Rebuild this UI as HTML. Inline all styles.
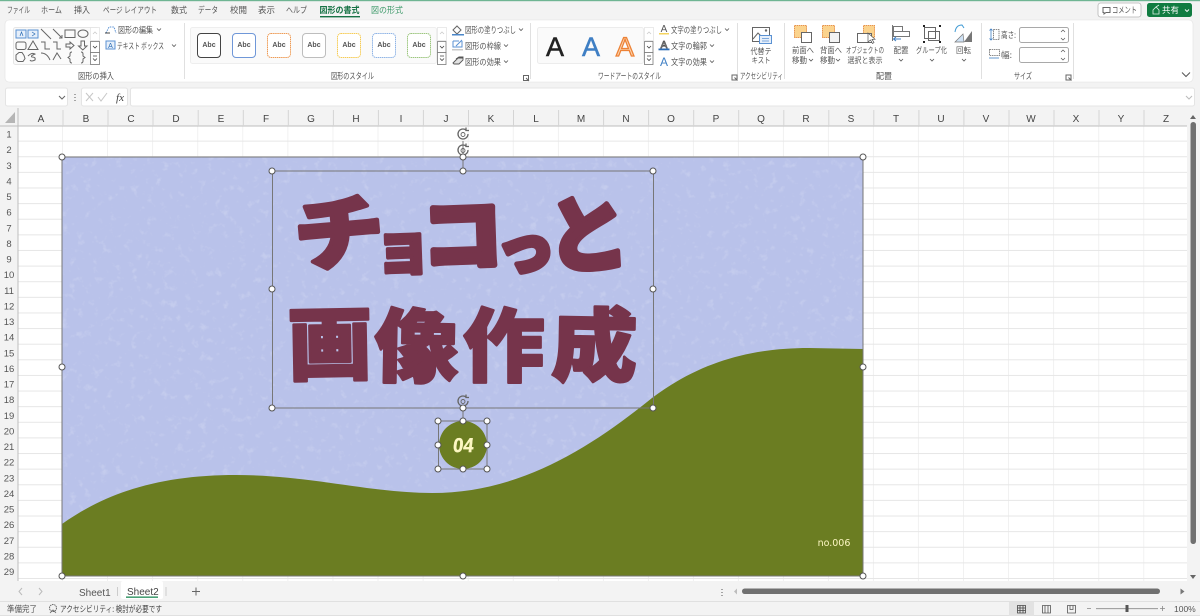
<!DOCTYPE html>
<html lang="ja">
<head>
<meta charset="utf-8">
<title>Excel</title>
<style>
html,body{margin:0;padding:0;background:#f3f3f3;width:1200px;height:616px;overflow:hidden}
svg{display:block}
text{font-family:"Liberation Sans","Noto Sans CJK JP",sans-serif;fill:#444;font-size:8.5px}
.t{font-family:"Noto Sans CJK JP","Liberation Sans",sans-serif;fill:#555}
.h{font-size:10px;fill:#444;text-anchor:middle}
.r{font-size:9.5px;fill:#555;text-anchor:middle}
.c{font-family:"Noto Sans CJK JP","Liberation Sans",sans-serif;fill:#555;font-size:8px;text-anchor:middle}
.big text{font-family:"Noto Sans CJK JP",sans-serif;font-weight:900;fill:#76344b;stroke:#76344b;stroke-linejoin:round}
.ic{fill:none;stroke:#666;stroke-width:1}
.abc{font-size:7px;font-weight:bold;fill:#555;text-anchor:middle}
.hd{fill:#fff;stroke:#555;stroke-width:1}
.rot{fill:none;stroke:#666;stroke-width:1.3}
</style>
</head>
<body>
<svg width="1200" height="616" viewBox="0 0 1200 616" xmlns="http://www.w3.org/2000/svg">
<defs>
<filter id="mott" x="0" y="0" width="100%" height="100%">
<feTurbulence type="fractalNoise" baseFrequency="0.13" numOctaves="3" seed="7"/>
<feColorMatrix type="matrix" values="0 0 0 0 1  0 0 0 0 1  0 0 0 0 1  4 0 0 0 -2.35"/>
</filter>
<pattern id="gv" width="45.05" height="15.62" patternUnits="userSpaceOnUse" x="17.9" y="126">
<rect width="45.05" height="15.62" fill="#fff"/>
<path d="M45 0V15.62M0 15.1H45.05" stroke="#e6e6e6" stroke-width="1" fill="none"/>
</pattern>
</defs>

<!-- base -->
<rect width="1200" height="616" fill="#f3f3f3"/>
<rect width="1200" height="1.2" fill="#6fb593"/>

<!-- tabs -->
<g class="tabs">
<text class="t" x="7" y="13" textLength="23" lengthAdjust="spacingAndGlyphs">ファイル</text>
<text class="t" x="41" y="13" textLength="21" lengthAdjust="spacingAndGlyphs">ホーム</text>
<text class="t" x="74" y="13" textLength="16" lengthAdjust="spacingAndGlyphs">挿入</text>
<text class="t" x="103" y="13" textLength="54" lengthAdjust="spacingAndGlyphs">ページ レイアウト</text>
<text class="t" x="171" y="13" textLength="16" lengthAdjust="spacingAndGlyphs">数式</text>
<text class="t" x="198" y="13" textLength="20" lengthAdjust="spacingAndGlyphs">データ</text>
<text class="t" x="230" y="13" textLength="17" lengthAdjust="spacingAndGlyphs">校閲</text>
<text class="t" x="258" y="13" textLength="17" lengthAdjust="spacingAndGlyphs">表示</text>
<text class="t" x="286" y="13" textLength="21" lengthAdjust="spacingAndGlyphs">ヘルプ</text>
<text class="t" x="319.500" y="13" textLength="40" lengthAdjust="spacingAndGlyphs" style="fill:#177245;font-weight:bold">図形の書式</text>
<rect x="320" y="16" width="40" height="1.4" fill="#177245"/>
<text class="t" x="371" y="13" textLength="32" lengthAdjust="spacingAndGlyphs" style="fill:#3f9a6b">図の形式</text>
</g>

<!-- comment / share -->
<rect x="1098" y="3" width="43" height="14" rx="2.5" fill="#fff" stroke="#b5b5b5" stroke-width=".8"/>
<path d="M1103 7.500h7v5h-4l-2 1.500v-1.500h-1z" class="ic" stroke-width=".8"/>
<text class="t" x="1112" y="13" textLength="25" lengthAdjust="spacingAndGlyphs">コメント</text>
<rect x="1147" y="3" width="45" height="14" rx="2.500" fill="#107c41"/>
<path d="M1153 14v-4l3-3 3 3v4zM1156 7l3-2" fill="none" stroke="#dff0e6" stroke-width=".8"/>
<text class="t" x="1162" y="13" textLength="17" lengthAdjust="spacingAndGlyphs" style="fill:#fff">共有</text>
<path d="M1185 9.500l2 2 2-2" fill="none" stroke="#fff" stroke-width=".9"/>

<!-- ribbon -->
<rect x="5" y="20" width="1188" height="62" rx="4" fill="#fff" stroke="#e2e2e2" stroke-width=".6"/>
<g stroke="#e0e0e0" stroke-width="1">
<path d="M184.500 23V79M530.500 23V79M737.500 23V79M784.500 23V79M981.500 23V79M1073.500 23V79"/>
</g>
<g>
<text class="t" x="78" y="79" textLength="36" lengthAdjust="spacingAndGlyphs">図形の挿入</text>
<text class="t" x="331" y="79" textLength="43" lengthAdjust="spacingAndGlyphs">図形のスタイル</text>
<text class="t" x="598" y="79" textLength="63" lengthAdjust="spacingAndGlyphs">ワードアートのスタイル</text>
<text class="t" x="740" y="79" textLength="43" lengthAdjust="spacingAndGlyphs">アクセシビリティ</text>
<text class="t" x="876" y="79" textLength="16" lengthAdjust="spacingAndGlyphs">配置</text>
<text class="t" x="1014" y="79" textLength="18" lengthAdjust="spacingAndGlyphs">サイズ</text>
</g>
<!-- launchers -->
<path d="M523.500 75.500h5v5h-5zM526 78l3 3" class="ic" stroke-width=".6"/>
<path d="M732 75h5v5h-5zM734.500 77.500l3 3" class="ic" stroke-width=".6"/>
<path d="M1066 75h5v5h-5zM1068.500 77.500l3 3" class="ic" stroke-width=".6"/>
<path d="M1182 72.500l4 4 4-4" fill="none" stroke="#555" stroke-width="1"/>

<!-- shape gallery -->
<rect x="13.500" y="27.500" width="85" height="37" rx="2" fill="#fafafa" stroke="#e6e6e6"/>
<g class="ic">
<rect x="16" y="30" width="10" height="8" stroke="#5b92d3" fill="#e6effa"/>
<rect x="28" y="30" width="10" height="8" stroke="#5b92d3" fill="#e6effa"/>
<path d="M20 36l1.500-4 1.500 4M32 32l3 2-3 2" stroke-width=".7" stroke="#2b6cb5"/>
<path d="M41 29l10 10M53 29l9 9M59 38h3v-3"/>
<rect x="65" y="30" width="10" height="7.500"/>
<ellipse cx="83" cy="33.700" rx="5" ry="3.700"/>
<rect x="16" y="42" width="10" height="7.500" rx="2"/>
<path d="M33 41l5 8.500H28zM41 42h4v7h5M53 42h4v7h4"/>
<path d="M66 44h4v-2l4 3.500-4 3.500v-2h-4zM81 41h3.500v5h2.500l-4.200 4-4.300-4h2.500z"/>
<path d="M16 55l3-2.500h3l2 3 1 3-2 3h-5l-2-2zM28 56q4-4 7-2-5 2-3 3 4 0 3 3-4 2-5 0M41 53q6 0 9 7M53 60l4-7 4 6"/>
<path d="M72 52q-2 0-2 2v2l-2 1.500 2 1.500v2q0 2 2 2M81 52q2 0 2 2v2l2 1.500-2 1.500v2q0 2-2 2"/>
</g>
<rect x="90.500" y="27.500" width="9" height="13" fill="#fff" stroke="#e2e2e2" stroke-width=".7"/>
<rect x="90.500" y="41.500" width="9" height="11" fill="#fff" stroke="#7a7a7a" stroke-width=".8"/>
<rect x="90.500" y="52.500" width="9" height="12" fill="#fff" stroke="#7a7a7a" stroke-width=".8"/>
<path d="M93 34l2-2 2 2" fill="none" stroke="#ccc" stroke-width=".8"/>
<path d="M93 46l2 2 2-2M93 56h4M93 58.500l2 2 2-2" fill="none" stroke="#444" stroke-width=".8"/>

<!-- edit shape/ textbox -->
<path d="M106 33l3-6h5l2 6" fill="none" stroke="#5b92d3" stroke-dasharray="1.500 1"/>
<path d="M105 33h5" stroke="#444"/>
<text class="t" x="118" y="33" textLength="35" lengthAdjust="spacingAndGlyphs">図形の編集</text>
<path d="M157 28.500l2 2 2-2" fill="none" stroke="#555" stroke-width=".8"/>
<rect x="106" y="41" width="9" height="8" fill="#e6effa" stroke="#5b92d3"/>
<text x="110.500" y="48" text-anchor="middle" style="font-size:7px;fill:#2b6cb5">A</text>
<text class="t" x="117" y="49" textLength="47" lengthAdjust="spacingAndGlyphs">テキスト ボックス</text>
<path d="M172 44.500l2 2 2-2" fill="none" stroke="#555" stroke-width=".8"/>

<!-- style gallery -->
<rect x="190.500" y="27.500" width="246" height="36" rx="2" fill="#fafafa" stroke="#eeeeee"/>
<g stroke-width="1">
<rect x="197.500" y="33.500" width="23" height="24" rx="3.500" fill="#fff" stroke="#444"/>
<rect x="232.500" y="33.500" width="23" height="24" rx="3.500" fill="#fff" stroke="#6f97d8"/>
<rect x="267.500" y="33.500" width="23" height="24" rx="3.500" fill="#fff" stroke="#ee9b55" stroke-dasharray="1.500 .6"/>
<rect x="302.500" y="33.500" width="23" height="24" rx="3.500" fill="#fff" stroke="#bdbdbd"/>
<rect x="337.500" y="33.500" width="23" height="24" rx="3.500" fill="#fff" stroke="#f6cc55" stroke-dasharray="1.500 .6"/>
<rect x="372.500" y="33.500" width="23" height="24" rx="3.500" fill="#fff" stroke="#8fb4e6" stroke-dasharray="1.500 .6"/>
<rect x="407.500" y="33.500" width="23" height="24" rx="3.500" fill="#fff" stroke="#9cc67e" stroke-dasharray="1.500 .6"/>
</g>
<text class="abc" x="209" y="47">Abc</text><text class="abc" x="244" y="47">Abc</text><text class="abc" x="279" y="47">Abc</text><text class="abc" x="314" y="47">Abc</text><text class="abc" x="349" y="47">Abc</text><text class="abc" x="384" y="47">Abc</text><text class="abc" x="419" y="47">Abc</text>
<rect x="437.500" y="27.500" width="9" height="13" fill="#fff" stroke="#e2e2e2" stroke-width=".7"/>
<rect x="437.500" y="41.500" width="8.500" height="11" fill="#fff" stroke="#7a7a7a" stroke-width=".8"/>
<rect x="437.500" y="52.500" width="8.500" height="12" fill="#fff" stroke="#7a7a7a" stroke-width=".8"/>
<path d="M440 34l2-2 2 2" fill="none" stroke="#ccc" stroke-width=".8"/>
<path d="M440 46l2 2 2-2M440 56h4M440 58.500l2 2 2-2" fill="none" stroke="#444" stroke-width=".8"/>

<!-- fill outline effect -->
<path d="M453 30l4-4 4 4-4 4zM452 35h12" fill="none" stroke="#666"/>
<rect x="452" y="34" width="12" height="1.500" fill="#4a86c8"/>
<text class="t" x="465" y="33" textLength="51" lengthAdjust="spacingAndGlyphs">図形の塗りつぶし</text>
<path d="M519 28.500l2 2 2-2" fill="none" stroke="#555" stroke-width=".8"/>
<path d="M453 41h6M453 41v6h9v-6M456 46l6-6" fill="none" stroke="#5b92d3"/><rect x="452" y="49" width="11" height="1.500" fill="#c9c9c9"/>
<text class="t" x="465" y="49" textLength="36" lengthAdjust="spacingAndGlyphs">図形の枠線</text>
<path d="M504 44.500l2 2 2-2" fill="none" stroke="#555" stroke-width=".8"/>
<path d="M453 63l5-5h5v2l-4 4h-5zM456 59l3-2h4v2" fill="#e3e3e3" stroke="#555" stroke-width=".9"/>
<text class="t" x="465" y="65" textLength="36" lengthAdjust="spacingAndGlyphs">図形の効果</text>
<path d="M504 60.500l2 2 2-2" fill="none" stroke="#555" stroke-width=".8"/>

<!-- wordart gallery -->
<rect x="537.500" y="27.500" width="106" height="36" rx="2" fill="#fafafa" stroke="#ececec"/>
<text x="555" y="56" text-anchor="middle" style="font-size:27px;fill:#222;stroke:#222;stroke-width:.5">A</text>
<text x="591" y="56" text-anchor="middle" style="font-size:27px;fill:#3f7fc4;stroke:#3f7fc4;stroke-width:.5">A</text>
<text x="625" y="56" text-anchor="middle" style="font-size:27px;fill:#fbd6b2;stroke:#ed8236;stroke-width:1.300">A</text>
<rect x="644.500" y="27.500" width="9" height="13" fill="#fff" stroke="#e2e2e2" stroke-width=".7"/>
<rect x="644.500" y="41.500" width="8.500" height="11" fill="#fff" stroke="#7a7a7a" stroke-width=".8"/>
<rect x="644.500" y="52.500" width="8.500" height="12" fill="#fff" stroke="#7a7a7a" stroke-width=".8"/>
<path d="M647 34l2-2 2 2" fill="none" stroke="#ccc" stroke-width=".8"/>
<path d="M647 46l2 2 2-2M647 56h4M647 58.500l2 2 2-2" fill="none" stroke="#444" stroke-width=".8"/>

<text x="664" y="32" text-anchor="middle" style="font-size:10px;fill:#555">A</text><rect x="659" y="33" width="10" height="1.500" fill="#f4d35e"/>
<text class="t" x="671" y="33" textLength="51" lengthAdjust="spacingAndGlyphs">文字の塗りつぶし</text>
<path d="M725 28.500l2 2 2-2" fill="none" stroke="#555" stroke-width=".8"/>
<text x="664" y="48" text-anchor="middle" style="font-size:10px;fill:#fff;stroke:#555;stroke-width:.8">A</text><rect x="658.500" y="48.500" width="11" height="1.800" fill="#2b6cb5"/>
<text class="t" x="671" y="49" textLength="36" lengthAdjust="spacingAndGlyphs">文字の輪郭</text>
<path d="M710 44.500l2 2 2-2" fill="none" stroke="#555" stroke-width=".8"/>
<text x="664" y="66" text-anchor="middle" style="font-size:12px;fill:#3f7fc4">A</text>
<text class="t" x="671" y="65" textLength="36" lengthAdjust="spacingAndGlyphs">文字の効果</text>
<path d="M710 60.500l2 2 2-2" fill="none" stroke="#555" stroke-width=".8"/>

<!-- alt text -->
<rect x="752.500" y="27.500" width="17" height="14" fill="#fff" stroke="#666"/>
<path d="M753 39l5-6 5 5" fill="none" stroke="#666"/><circle cx="766" cy="30.500" r="1.200" fill="#666"/>
<rect x="759.500" y="35.500" width="12" height="8" fill="#e6effa" stroke="#5b92d3"/>
<path d="M762 38.500h7M762 41h7" stroke="#5b92d3" stroke-width=".7"/>
<text class="c" x="761" y="54" textLength="21" lengthAdjust="spacingAndGlyphs">代替テ</text>
<text class="c" x="761" y="63" textLength="19" lengthAdjust="spacingAndGlyphs">キスト</text>

<!-- arrange -->
<rect x="794.500" y="25.500" width="12" height="12" fill="#fbd38d" stroke="#e8944a" stroke-dasharray="1.500 .6"/>
<rect x="801.500" y="32.500" width="10" height="10" fill="#fff" stroke="#666"/>
<text class="c" x="803" y="53" textLength="22" lengthAdjust="spacingAndGlyphs">前面へ</text>
<text class="c" x="799.500" y="63" textLength="15" lengthAdjust="spacingAndGlyphs">移動</text>
<path d="M809 59l2 2 2-2" fill="none" stroke="#555" stroke-width=".8"/>
<rect x="822.500" y="25.500" width="12" height="12" fill="#fbd38d" stroke="#e8944a" stroke-dasharray="1.500 .6"/>
<rect x="829.500" y="32.500" width="10" height="10" fill="#f3f3f3" stroke="#666"/>
<text class="c" x="831" y="53" textLength="22" lengthAdjust="spacingAndGlyphs">背面へ</text>
<text class="c" x="827.500" y="63" textLength="15" lengthAdjust="spacingAndGlyphs">移動</text>
<path d="M836 59l2 2 2-2" fill="none" stroke="#555" stroke-width=".8"/>
<rect x="863.500" y="25.500" width="11" height="12" fill="#fbd38d" stroke="#e8944a" stroke-dasharray="1.500 .6"/>
<rect x="857.500" y="33.500" width="14" height="9" fill="#fff" stroke="#666"/>
<path d="M868 33v9l2.500-2 2 3.500 1.500-1-2-3.200h3z" fill="#fff" stroke="#555" stroke-width=".7"/>
<text class="c" x="865" y="53" textLength="38" lengthAdjust="spacingAndGlyphs">オブジェクトの</text>
<text class="c" x="865" y="63" textLength="35" lengthAdjust="spacingAndGlyphs">選択と表示</text>
<path d="M892.500 25v16" stroke="#777" fill="none"/>
<rect x="893.500" y="26.500" width="9" height="5" fill="#fff" stroke="#777"/>
<rect x="893.500" y="31.500" width="16" height="5" fill="#fff" stroke="#777"/>
<path d="M901 39h-7M896 37l-2.500 2 2.500 2" fill="none" stroke="#3f7fc4"/>
<text class="c" x="901" y="53" textLength="15" lengthAdjust="spacingAndGlyphs">配置</text>
<path d="M899 59l2 2 2-2" fill="none" stroke="#555" stroke-width=".8"/>
<rect x="924.500" y="27.500" width="11" height="11" fill="none" stroke="#666"/>
<rect x="928.500" y="31.500" width="11" height="9" fill="none" stroke="#666"/>
<g fill="#222"><rect x="923" y="25" width="2" height="2"/><rect x="939" y="25" width="2" height="2"/><rect x="923" y="41" width="2" height="2"/><rect x="939" y="41" width="2" height="2"/></g>
<text class="c" x="931.500" y="53" textLength="31" lengthAdjust="spacingAndGlyphs">グループ化</text>
<path d="M930 59l2 2 2-2" fill="none" stroke="#555" stroke-width=".8"/>
<path d="M964 42l8-11v11z" fill="#777"/><path d="M955 42h9l-1-8z" fill="#cfe2f5" stroke="#777" stroke-width=".7"/>
<path d="M955 32q1-7 7-7l2 3" fill="none" stroke="#3f9ad4" stroke-width="1"/>
<text class="c" x="963.500" y="53" textLength="15" lengthAdjust="spacingAndGlyphs">回転</text>
<path d="M962 59l2 2 2-2" fill="none" stroke="#555" stroke-width=".8"/>

<!-- size -->
<path d="M991 29v11M989.500 30.500l1.500-1.500 1.500 1.500M989.500 38.500l1.500 1.500 1.500-1.500" fill="none" stroke="#3f7fc4" stroke-width=".8"/>
<rect x="993.500" y="29.500" width="5.500" height="10" fill="none" stroke="#666" stroke-dasharray="1.500 .7" stroke-width=".8"/>
<text class="t" x="1001" y="38" textLength="15" lengthAdjust="spacingAndGlyphs">高さ:</text>
<rect x="1019.500" y="27.500" width="49" height="15" rx="2" fill="#fff" stroke="#a9a9a9"/>
<path d="M1061 32l2-2 2 2M1061 38l2 2 2-2" fill="none" stroke="#555" stroke-width=".7"/>
<rect x="989.500" y="49.500" width="10" height="6" fill="none" stroke="#666" stroke-dasharray="1.500 .7" stroke-width=".8"/>
<path d="M989 58h10" stroke="#3f7fc4" stroke-width=".8"/>
<text class="t" x="1001" y="58" textLength="11" lengthAdjust="spacingAndGlyphs">幅:</text>
<rect x="1019.500" y="47.500" width="49" height="15" rx="2" fill="#fff" stroke="#a9a9a9"/>
<path d="M1061 52l2-2 2 2M1061 58l2 2 2-2" fill="none" stroke="#555" stroke-width=".7"/>

<!-- formula bar -->
<rect x="5.500" y="88" width="62" height="18" rx="2" fill="#fff" stroke="#e4e4e4"/>
<path d="M59 96l3 3 3-3" fill="none" stroke="#666"/>
<path d="M75 94v1M75 97v1M75 100v1" stroke="#555"/>
<rect x="81.500" y="88" width="46" height="18" rx="2" fill="#fff" stroke="#e4e4e4"/>
<path d="M86 93l7 8M93 93l-7 8M98 97l3 4 6-8" fill="none" stroke="#c7c7c7"/>
<text x="120" y="101" text-anchor="middle" style="font-family:'Liberation Serif',serif;font-style:italic;font-size:11px;fill:#444">fx</text>
<rect x="130.500" y="88" width="1064" height="18" rx="2" fill="#fff" stroke="#e4e4e4"/>
<path d="M1186 96l3 3 3-3" fill="none" stroke="#bbb"/>

<!-- grid -->
<rect x="18" y="126" width="1170" height="455" fill="url(#gv)"/>
<rect x="0" y="108" width="1188" height="18" fill="#f3f3f3"/>
<rect x="0" y="126" width="18" height="455" fill="#f3f3f3"/>
<rect x="0" y="125.500" width="1188" height="1" fill="#bdbdbd"/>
<rect x="17.500" y="108" width="1" height="473" fill="#bdbdbd"/>
<path d="M15 112v11H5z" fill="#b5b5b5"/>
<path d="M63 110V126M108 110V126M153 110V126M198.200 110V126M243.300 110V126M288.300 110V126M333.400 110V126M378.400 110V126M423.400 110V126M468.500 110V126M513.500 110V126M558.600 110V126M603.600 110V126M648.600 110V126M693.700 110V126M738.700 110V126M783.800 110V126M828.800 110V126M873.800 110V126M918.900 110V126M963.900 110V126M1009 110V126M1054 110V126M1099 110V126M1144 110V126" stroke="#d4d4d4"/>
<g>
<text class="h" x="41" y="122">A</text><text class="h" x="86" y="122">B</text><text class="h" x="131" y="122">C</text><text class="h" x="176" y="122">D</text><text class="h" x="221" y="122">E</text><text class="h" x="266" y="122">F</text><text class="h" x="311" y="122">G</text><text class="h" x="356" y="122">H</text><text class="h" x="401" y="122">I</text><text class="h" x="446" y="122">J</text><text class="h" x="491" y="122">K</text><text class="h" x="536" y="122">L</text><text class="h" x="581" y="122">M</text><text class="h" x="626" y="122">N</text><text class="h" x="671" y="122">O</text><text class="h" x="716" y="122">P</text><text class="h" x="761" y="122">Q</text><text class="h" x="806" y="122">R</text><text class="h" x="851" y="122">S</text><text class="h" x="896" y="122">T</text><text class="h" x="941" y="122">U</text><text class="h" x="986" y="122">V</text><text class="h" x="1031" y="122">W</text><text class="h" x="1076" y="122">X</text><text class="h" x="1121" y="122">Y</text><text class="h" x="1166" y="122">Z</text>
</g>
<g>
<text class="r" x="9" y="137.500">1</text><text class="r" x="9" y="153">2</text><text class="r" x="9" y="169">3</text><text class="r" x="9" y="184.500">4</text><text class="r" x="9" y="200">5</text><text class="r" x="9" y="215.700">6</text><text class="r" x="9" y="231.300">7</text><text class="r" x="9" y="247">8</text><text class="r" x="9" y="262.500">9</text><text class="r" x="9" y="278">10</text><text class="r" x="9" y="294">11</text><text class="r" x="9" y="309.500">12</text><text class="r" x="9" y="325">13</text><text class="r" x="9" y="340.700">14</text><text class="r" x="9" y="356.300">15</text><text class="r" x="9" y="372">16</text><text class="r" x="9" y="387.500">17</text><text class="r" x="9" y="403">18</text><text class="r" x="9" y="419">19</text><text class="r" x="9" y="434.500">20</text><text class="r" x="9" y="450">21</text><text class="r" x="9" y="465.700">22</text><text class="r" x="9" y="481.300">23</text><text class="r" x="9" y="497">24</text><text class="r" x="9" y="512.500">25</text><text class="r" x="9" y="528">26</text><text class="r" x="9" y="544">27</text><text class="r" x="9" y="559.500">28</text><text class="r" x="9" y="575">29</text>
</g>

<!-- picture -->
<rect x="62" y="157" width="801" height="419" fill="#b9c2ea"/>
<rect x="62" y="157" width="801" height="419" filter="url(#mott)" opacity=".16"/>
<path d="M62 524C110 490 165 475 236 475C310 475 370 493 432 493C520 493 590 448 652 398C700 362 750 348 809 348L863 349V576H62Z" fill="#6b7d22"/>
<rect x="62" y="157" width="801" height="419" fill="none" stroke="#777" stroke-width="1"/>
<path d="M463 141V157M463 156V171" stroke="#777"/>

<!-- title text -->
<g class="big">
<text transform="translate(297 266) rotate(-5) scale(1.120 1)" style="font-size:80px;stroke-width:4px">チ</text>
<text transform="translate(375 270) rotate(-2) scale(.95 1)" style="font-size:60px;stroke-width:4px">ョ</text>
<text transform="translate(423 265) rotate(-2) scale(1.030 1)" style="font-size:78px;stroke-width:6px">コ</text>
<text transform="translate(498 271) rotate(-4)" style="font-size:58px;stroke-width:5px">っ</text>
<text transform="translate(549 268) rotate(-4) scale(.97 1)" style="font-size:84px;stroke-width:5px">と</text>
<text transform="translate(288 374) rotate(-1) scale(1.060 1)" style="font-size:80px;stroke-width:2.500px">画</text>
<text transform="translate(374 375) rotate(1) scale(1.050 1)" style="font-size:80px;stroke-width:2.500px">像</text>
<text transform="translate(463 375) scale(1.020 1)" style="font-size:80px;stroke-width:2.500px">作</text>
<text transform="translate(551 374) rotate(1) scale(1.070 1)" style="font-size:80px;stroke-width:2.500px">成</text>
</g>
<rect x="272.500" y="171" width="381" height="237" fill="none" stroke="#777" stroke-width="1"/>

<!-- circle -->
<circle cx="463" cy="445" r="24" fill="#6b7d22"/>
<text transform="translate(452.500 452) skewX(-6) scale(.92 1)" style="font-family:'Liberation Sans',sans-serif;font-weight:bold;font-size:20px;fill:#fdf7c3;stroke:#fdf7c3;stroke-width:.4">04</text>
<rect x="438.500" y="421" width="48.500" height="48" fill="none" stroke="#777"/>
<path d="M463 406V421" stroke="#777"/>
<text x="834" y="546" text-anchor="middle" style="font-family:'DejaVu Sans',sans-serif;font-size:9.500px;fill:#fdf7c3">no.006</text>

<!-- rotate icons -->
<g class="rot">
<path d="M468 134a5 5 0 1 1-2-4M466 127.500v3h3"/><circle cx="463" cy="134.500" r="2" stroke-width=".9"/>
<path d="M468 150a5 5 0 1 1-2-4M466 143.500v3h3"/><circle cx="463" cy="150.500" r="2" stroke-width=".9"/>
<path d="M468 401a5 5 0 1 1-2-4M466 394.500v3h3"/><circle cx="463" cy="401.500" r="2" stroke-width=".9"/>
</g>

<!-- handles -->
<g class="hd">
<circle cx="62" cy="157" r="3"/><circle cx="463" cy="157" r="3"/><circle cx="863" cy="157" r="3"/><circle cx="62" cy="367" r="3"/><circle cx="863" cy="367" r="3"/><circle cx="62" cy="576" r="3"/><circle cx="463" cy="576" r="3"/><circle cx="863" cy="576" r="3"/>
<circle cx="272" cy="171" r="3"/><circle cx="463" cy="171" r="3"/><circle cx="653" cy="171" r="3"/><circle cx="272" cy="289" r="3"/><circle cx="653" cy="289" r="3"/><circle cx="272" cy="408" r="3"/><circle cx="463" cy="408" r="3"/><circle cx="653" cy="408" r="3"/>
<circle cx="438" cy="421" r="3"/><circle cx="463" cy="421" r="3"/><circle cx="487" cy="421" r="3"/><circle cx="438" cy="445" r="3"/><circle cx="487" cy="445" r="3"/><circle cx="438" cy="469" r="3"/><circle cx="463" cy="469" r="3"/><circle cx="487" cy="469" r="3"/>
</g>

<!-- vertical scrollbar -->
<rect x="1187" y="108" width="13" height="474" fill="#f3f3f3"/>
<path d="M1193 115l-3 4h6z" fill="#666"/>
<rect x="1190.500" y="122" width="5.500" height="422" rx="2.700" fill="#707070"/>
<path d="M1193 579l-3-4h6z" fill="#666"/>

<!-- sheet tab bar -->
<rect x="0" y="581.500" width="1200" height="20" fill="#f3f3f3"/>
<path d="M22 588l-3 3.500 3 3.500M39 588l3 3.500-3 3.500" fill="none" stroke="#bbb"/>
<text x="79" y="596" style="font-size:10px;fill:#555">Sheet1</text>
<path d="M117.500 587v9" stroke="#ccc"/>
<rect x="121" y="581" width="42" height="18" rx="2" fill="#fff"/>
<text x="127" y="595" style="font-size:10px;fill:#444">Sheet2</text>
<rect x="126" y="596.500" width="32" height="1.300" fill="#1d8a55"/>
<path d="M166 587v9" stroke="#ccc"/>
<path d="M192 591.500h8M196 587.500v8" stroke="#666"/>
<path d="M722 589v1M722 592v1M722 595v1" stroke="#555"/>
<path d="M737 588.500l-3 3 3 3z" fill="#888" opacity=".5"/>
<rect x="742" y="588.500" width="418" height="5.500" rx="2.700" fill="#707070"/>
<path d="M1180.500 588.500l4 3-4 3z" fill="#777"/>

<!-- status bar -->
<rect x="0" y="601.500" width="1200" height="14.500" fill="#f3f3f3"/>
<rect x="0" y="601" width="1200" height=".8" fill="#dcdcdc"/>
<rect x="0" y="615" width="1200" height="1" fill="#e0e0e0"/>
<text class="t" x="7" y="612" textLength="30" lengthAdjust="spacingAndGlyphs">準備完了</text>
<circle cx="53" cy="608" r="3.500" fill="none" stroke="#666" stroke-dasharray="1.500 .7"/>
<path d="M50 613l3-3 3 3" fill="none" stroke="#666" stroke-width=".8"/>
<text class="t" x="60" y="612" textLength="102" lengthAdjust="spacingAndGlyphs" style="fill:#444">アクセシビリティ: 検討が必要です</text>
<rect x="1009" y="602" width="25" height="14" fill="#e2e2e2"/>
<path d="M1017.500 605.500h8v7.500h-8zM1017.500 608h8M1017.500 610.500h8M1020 605.500v7.500M1023 605.500v7.500" fill="none" stroke="#444" stroke-width=".8"/>
<path d="M1042.500 605.500h8v7.500h-8zM1045 605.500v7.500M1048 605.500v7.500" fill="none" stroke="#555" stroke-width=".8"/>
<path d="M1067.500 605.500h8v7.500h-8zM1070 605.500v4h3v-4" fill="none" stroke="#555" stroke-width=".8"/>
<path d="M1087 608.500h4M1096 608.700h62M1160 608.500h5M1162.500 606v5" stroke="#888" stroke-width=".8"/>
<rect x="1125.500" y="605" width="3" height="7" fill="#555"/>
<text x="1174" y="612" style="font-size:8.500px;fill:#555">100%</text>
</svg>
</body>
</html>
